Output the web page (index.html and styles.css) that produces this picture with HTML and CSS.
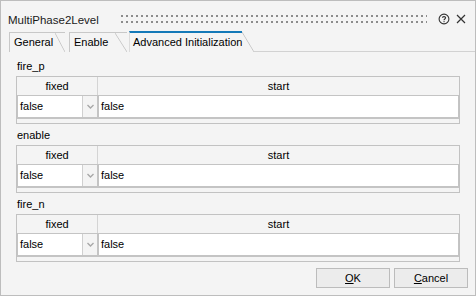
FILE: index.html
```html
<!DOCTYPE html>
<html>
<head>
<meta charset="utf-8">
<link rel="stylesheet" href="styles.css">
</head>
<body>
<div class="win">
  <div class="titlebar">
    <span class="title">MultiPhase2Level</span>
    <div class="grip"></div>
    <svg class="help" width="12" height="12" viewBox="0 0 12 12"><circle cx="6" cy="6" r="4.9" fill="none" stroke="#333" stroke-width="1.1"/><path d="M4.4 4.8 C4.4 3.2 7.6 3.2 7.6 4.8 C7.6 6 6 5.9 6 7.2" fill="none" stroke="#333" stroke-width="1.1"/><rect x="5.5" y="8.1" width="1.1" height="1.1" fill="#333"/></svg>
    <svg class="close" width="10" height="10" viewBox="0 0 10 10"><path d="M1 1 L9 9 M9 1 L1 9" stroke="#333" stroke-width="1.2"/></svg>
  </div>
  <div class="tabs">
    <div class="tab"><span class="tl">General</span><i class="slant"></i></div>
    <div class="tab tab-enable"><span class="tl">Enable</span><i class="slant"></i></div>
    <div class="tab active"><span class="tl">Advanced Initialization</span><i class="slant"></i></div>
    <div class="tabline"></div>
  </div>
  <div class="page">
    <div class="section">
      <div class="label">fire_p</div>
      <div class="tbl">
        <div class="hdr"><div class="hfixed">fixed</div><div class="hstart">start</div></div>
        <div class="row">
          <div class="sel"><span class="selv">false</span><span class="arrow"><svg width="7" height="5" viewBox="0 0 7 5"><path d="M0.5 1 L3.5 4 L6.5 1" fill="none" stroke="#a8a8a8" stroke-width="1.4"/></svg></span></div>
          <div class="inp">false</div>
        </div>
        <div class="foot"></div>
      </div>
    </div>
    <div class="section">
      <div class="label">enable</div>
      <div class="tbl">
        <div class="hdr"><div class="hfixed">fixed</div><div class="hstart">start</div></div>
        <div class="row">
          <div class="sel"><span class="selv">false</span><span class="arrow"><svg width="7" height="5" viewBox="0 0 7 5"><path d="M0.5 1 L3.5 4 L6.5 1" fill="none" stroke="#a8a8a8" stroke-width="1.4"/></svg></span></div>
          <div class="inp">false</div>
        </div>
        <div class="foot"></div>
      </div>
    </div>
    <div class="section">
      <div class="label">fire_n</div>
      <div class="tbl">
        <div class="hdr"><div class="hfixed">fixed</div><div class="hstart">start</div></div>
        <div class="row">
          <div class="sel"><span class="selv">false</span><span class="arrow"><svg width="7" height="5" viewBox="0 0 7 5"><path d="M0.5 1 L3.5 4 L6.5 1" fill="none" stroke="#a8a8a8" stroke-width="1.4"/></svg></span></div>
          <div class="inp">false</div>
        </div>
        <div class="foot"></div>
      </div>
    </div>
  </div>
  <div class="buttons">
    <button class="btn"><u>O</u>K</button>
    <button class="btn"><u>C</u>ancel</button>
  </div>
</div>
</body>
</html>
```

FILE: styles.css
```css
* { box-sizing: border-box; }
html, body { margin: 0; padding: 0; }
body {
  width: 476px;
  height: 296px;
  font-family: "Liberation Sans", Arial, sans-serif;
  font-size: 11px;
  color: #000;
  background: #f4f4f4;
}
.win {
  width: 476px;
  height: 296px;
  border: 1px solid #bdbdbd;
  background: #f4f4f4;
  display: flex;
  flex-direction: column;
}
.titlebar {
  height: 30px;
  display: flex;
  align-items: flex-start;
  padding-left: 7px;
  flex: none;
}
.title {
  width: 97px;
  white-space: nowrap;
  font-size: 11.5px;
  line-height: 14px;
  margin-top: 12px;
  color: #1a1a1a;
}
.grip {
  flex: 1;
  height: 8px;
  margin: 14px 11px 0 16px;
  background-image: conic-gradient(from 0deg at 2px 2px, transparent 75%, #8c8c8c 0);
  background-size: 5px 6px;
}
.help { margin-top: 12px; flex: none; }
.close { margin: 13px 9px 0 6px; flex: none; }

.tabs {
  height: 21px;
  display: flex;
  align-items: flex-end;
  padding-left: 8px;
  flex: none;
}
.tab {
  display: flex;
  height: 20px;
  margin-right: 4px;
}
.tl {
  display: block;
  white-space: nowrap;
  border-left: 1px solid #c8c8c8;
  border-top: 1px solid #c8c8c8;
  padding: 0 4px;
  line-height: 19px;
  width: 46px;
}
.slant {
  display: block;
  width: 10px;
  height: 100%;
  border-top: 1px solid #c8c8c8;
  background: linear-gradient(to top right, transparent calc(50% - 0.8px), #c8c8c8 50%, transparent calc(50% + 0.8px));
}
.tab-enable .slant { width: 12px; }
.tab-enable { margin-right: 2px; }
.tab.active {
  height: 21px;
  margin-right: 0;
}
.active .tl {
  width: 113px;
  padding: 0 3px;
  border-top: 2px solid #1479b8;
  border-left-color: #dcdcdc;
  line-height: 19px;
}
.active .slant {
  width: 12px;
  border-top: none;
  background: linear-gradient(to top right, transparent calc(50% - 0.8px), #c8c8c8 50%, transparent calc(50% + 0.8px)) 0 1px / 100% 20px no-repeat;
}
.tabline {
  flex: 1;
  height: 1px;
  background: #d2d2d2;
}

.page {
  flex: 1;
  padding: 4px 15px 0 15px;
  display: flex;
  flex-direction: column;
}
.section { margin-bottom: 1px; }
.label {
  height: 20px;
  line-height: 20px;
  padding-left: 1px;
}
.tbl {
  border: 1px solid #c2c2c2;
  height: 48px;
  display: flex;
  flex-direction: column;
}
.hdr {
  height: 18px;
  display: flex;
  line-height: 18px;
}
.hfixed {
  width: 81px;
  text-align: center;
  border-right: 1px solid #d4d4d4;
}
.hstart { flex: 1; text-align: center; }
.row {
  height: 24px;
  display: flex;
}
.sel {
  width: 81px;
  display: flex;
  border: 1px solid #c4c4c4;
  border-bottom-width: 2px;
}
.selv {
  flex: 1;
  background: #fff;
  line-height: 21px;
  padding-left: 2px;
  border-right: 1px solid #d0d0d0;
}
.arrow {
  width: 14px;
  display: flex;
  align-items: center;
  justify-content: center;
  background: #f4f4f4;
}
.inp {
  flex: 1;
  background: #fff;
  border: 1px solid #c4c4c4;
  border-bottom-width: 2px;
  line-height: 21px;
  padding-left: 2px;
}
.foot { flex: 1; }

.buttons {
  display: flex;
  justify-content: flex-end;
  gap: 4px;
  padding: 0 7px 7px 0;
  flex: none;
}
.btn {
  width: 74px;
  height: 20px;
  border: 1px solid #bcbcbc;
  background: #ececec;
  font-family: "Liberation Sans", Arial, sans-serif;
  font-size: 11px;
  color: #000;
  padding: 0;
  border-radius: 0;
}
```
